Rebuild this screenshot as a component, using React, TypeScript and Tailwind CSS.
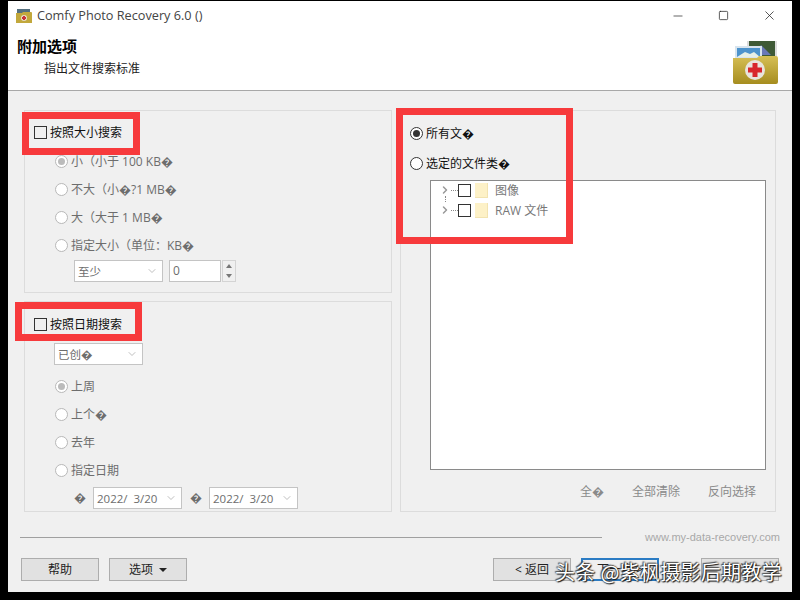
import React from 'react';
import { ChevronDown, ChevronRight, Minus, Square, X } from 'lucide-react';

const REPL = '\uFFFD';
const FONT = 'font-["Open_Sans","Noto_Sans_CJK_SC",sans-serif]';

const Check = () => <span className="w-[13px] h-[13px] shrink-0 border border-[#333] bg-transparent" />;

const Radio = ({ on, disabled }: { on?: boolean; disabled?: boolean }) => (
  <span
    className={`w-[13px] h-[13px] shrink-0 rounded-full border flex items-center justify-center ${
      disabled ? 'border-[#b8b8b8] bg-white' : 'border-[#333] bg-white'
    }`}
  >
    {on && <span className={`w-[7px] h-[7px] rounded-full ${disabled ? 'bg-[#bbb]' : 'bg-[#333]'}`} />}
  </span>
);

const RadioRow = ({ label, on }: { label: string; on?: boolean }) => (
  <div className="h-7 flex items-center gap-[3px] ml-[21px] text-[#6d6d6d]">
    <Radio on={on} disabled />
    <span className="whitespace-nowrap pt-[2px]">{label}</span>
  </div>
);

const Combo = ({ text, width }: { text: string; width: string }) => (
  <div className={`${width} h-[22px] bg-white border border-[#c4c4c4] flex items-center justify-between pl-[3px] pr-[4px] text-[#6d6d6d]`}>
    <span className="whitespace-pre pt-[2px] text-[11.500px]">{text}</span>
    <ChevronDown className="w-[12px] h-[12px] text-[#aaa]" strokeWidth={1.5} />
  </div>
);

const Btn = ({ children, className = 'border border-[#adadad] bg-[#e1e1e1]' }: { children?: React.ReactNode; className?: string }) => (
  <div className={`w-[78px] h-[23px] flex items-center justify-center text-[#222] pt-px ${className}`}>
    {children}
  </div>
);

const TreeRow = ({ label, first }: { label: string; first?: boolean }) => (
  <div className="relative h-5 pb-[2px] flex items-center">
    <ChevronRight className="w-[12px] h-[12px] text-[#999] ml-[8px]" strokeWidth={3} />
    <span className="w-[7px] border-t border-dotted border-[#888]" />
    <span className="w-[13px] h-[13px] border border-[#333] bg-white" />
    <span className="w-[13px] h-[15px] ml-[4px] bg-[#fdf1c7] border-r border-b border-[#f2e3b0]" />
    <span className="ml-[7px] text-[#777] pt-[2px]">{label}</span>
    {first && <span className="absolute left-[14px] top-[15px] h-[6px] border-l border-dotted border-[#888]" />}
  </div>
);

const FolderIcon = () => (
  <svg width="46" height="45" viewBox="0 0 46 45" className="absolute right-[13px] top-[39px]">
    <defs>
      <linearGradient id="fold" x1="0" y1="0" x2="0" y2="1">
        <stop offset="0" stopColor="#d6bf55" />
        <stop offset="1" stopColor="#a68d1f" />
      </linearGradient>
    </defs>
    <rect x="16" y="1" width="26" height="18" fill="#3f5a36" />
    <rect x="14" y="1" width="2" height="18" fill="#ddd" />
    <rect x="42" y="1" width="2" height="18" fill="#ddd" />
    <path d="M28 5l10 10H22z" fill="#6a78b8" />
    <rect x="2" y="6" width="27" height="13" fill="#d8e4ee" />
    <rect x="4" y="8" width="23" height="9" fill="#4d93cc" />
    <path d="M4 17l8-5 5 2 4-2 6 5z" fill="#e6efe6" />
    <path d="M0 18h24l2-2h17q2 0 2 2v24q0 2-2 2H2q-2 0-2-2z" fill="url(#fold)" />
    <circle cx="22" cy="30" r="10" fill="#e8e4dc" />
    <path d="M19.500 23h5v4.500h4.500v5h-4.500v4.500h-5v-4.500h-4.500v-5h4.500z" fill="#d8262c" />
  </svg>
);

const AppIcon = () => (
  <svg width="16" height="16" viewBox="0 0 16 16" className="shrink-0">
    <rect x="1" y="1" width="13" height="6" fill="#55707f" />
    <path d="M0 5h6l1-1h8q1 0 1 1v10H0z" fill="#c2a83c" />
    <circle cx="8" cy="10" r="3" fill="#e6dccb" />
    <path d="M7 8h2v1h1v2H9v1H7v-1H6V9h1z" fill="#c8323a" />
  </svg>
);

const Highlight = ({ className }: { className: string }) => (
  <div className={`absolute border-[7px] border-[#f73a3c] ${className}`} />
);

export default function App() {
  return (
    <div className={`relative w-[800px] h-[600px] bg-black pl-2 pr-2 pt-px pb-2 text-[12px] leading-none ${FONT}`}>
      <div className="w-full h-full bg-[#f0f0f0] flex flex-col">
        <div className="relative h-[89px] bg-white border-b border-[#a8a8a8] shrink-0 box-content">
          <div className="flex items-center h-[29px] pl-2">
            <AppIcon />
            <span className='ml-[5px] text-[12.700px] text-[#444] whitespace-nowrap'>Comfy Photo Recovery 6.0 ()</span>
            <div className="ml-auto flex items-center pr-[15px] gap-[33px] text-[#222]">
              <Minus className="w-[14px] h-[14px]" strokeWidth={1.2} />
              <Square className="w-[11px] h-[11px]" strokeWidth={1.6} />
              <X className="w-[15px] h-[15px]" strokeWidth={1.2} />
            </div>
          </div>
          <div className="ml-[9px] mt-[9px] text-[15px] font-bold text-black">附加选项</div>
          <div className="ml-9 mt-[9px] text-[12px] text-[#222]">指出文件搜索标准</div>
          <FolderIcon />
        </div>

        <div className="flex gap-2 ml-4 mt-[19px]">
          <div className="w-[368px] flex flex-col gap-2">
            <div className="h-[183px] border border-[#dcdcdc] pt-[11px] pl-[9px]">
              <div className="h-5 flex items-center gap-[3px] text-[#111]">
                <Check />
                <span className="pt-[2px]">按照大小搜索</span>
              </div>
              <div className="mt-[5px]">
                <RadioRow label={`小（小于 100 KB${REPL}`} on />
                <RadioRow label={`不大（小${REPL}?1 MB${REPL}`} />
                <RadioRow label={`大（大于 1 MB${REPL}`} />
                <RadioRow label={`指定大小（单位：KB${REPL}`} />
              </div>
              <div className="flex items-center ml-[40px] mt-px text-[#6d6d6d]">
                <Combo text="至少" width="w-[89px]" />
                <div className="ml-[6px] w-[52px] h-[22px] bg-white border border-[#c4c4c4] flex items-center pl-[3px]">0</div>
                <div className="ml-px w-[14px] h-[22px] border border-[#d4d4d4] flex flex-col items-center justify-around">
                  <span className="w-0 h-0 border-x-[3px] border-x-transparent border-b-[4px] border-b-[#777]" />
                  <span className="w-0 h-0 border-x-[3px] border-x-transparent border-t-[4px] border-t-[#777]" />
                </div>
              </div>
            </div>

            <div className="h-[211px] border border-[#dcdcdc] pt-[12px] pl-[9px]">
              <div className="h-5 flex items-center gap-[3px] text-[#111]">
                <Check />
                <span className="pt-[2px]">按照日期搜索</span>
              </div>
              <div className="ml-[20px] mt-[9px]">
                <Combo text={`已创${REPL}`} width="w-[89px]" />
              </div>
              <div className="mt-[7px]">
                <RadioRow label="上周" on />
                <RadioRow label={`上个${REPL}`} />
                <RadioRow label="去年" />
                <RadioRow label="指定日期" />
              </div>
              <div className="flex items-center ml-[40px] mt-[3px] text-[#6d6d6d]">
                <span className="w-[19px]">{REPL}</span>
                <Combo text="2022/  3/20" width="w-[89px]" />
                <span className="w-[19px] ml-[8px]">{REPL}</span>
                <Combo text="2022/  3/20" width="w-[89px]" />
              </div>
            </div>
          </div>

          <div className="w-[376px] h-[402px] border border-[#dcdcdc] pt-2 pl-[9px]">
            <div className="h-7 flex items-center gap-[3px] text-[#111]">
              <Radio on />
              <span className="pt-[2px]">所有文{REPL}</span>
            </div>
            <div className="h-7 mt-[2px] flex items-center gap-[3px] text-[#111]">
              <Radio />
              <span className="pt-[2px]">选定的文件类{REPL}</span>
            </div>
            <div className="ml-5 mt-[3px] w-[336px] h-[290px] bg-white border border-[#8a8a8a]">
              <TreeRow label="图像" first />
              <TreeRow label="RAW 文件" />
            </div>
            <div className="flex justify-end gap-7 mt-4 mr-[19px] text-[#8a8a8a]">
              <span>全{REPL}</span>
              <span>全部清除</span>
              <span>反向选择</span>
            </div>
          </div>
        </div>

        <div className="flex items-center h-4 mt-[17px] ml-3 mr-3">
          <div className="w-[582px] border-t border-[#a0a0a0]" />
          <span className='ml-auto text-[11px] text-[#a8a8a8] font-["Liberation_Sans",sans-serif]'>www.my-data-recovery.com</span>
        </div>

        <div className="flex mt-[13px] ml-[13px]">
          <Btn>帮助</Btn>
          <Btn className="ml-[10px] gap-[6px] border border-[#adadad] bg-[#e1e1e1]">
            选项
            <span className="w-0 h-0 border-x-[4px] border-x-transparent border-t-[4px] border-t-[#222]" />
          </Btn>
          <Btn className="ml-[306px] border border-[#adadad] bg-[#e1e1e1]">{'< 返回'}</Btn>
          <Btn className="ml-[10px] border-2 border-[#2b7cc4] bg-[#efefef]">{'下一步 >'}</Btn>
          <Btn className="ml-[42px] border border-[#adadad] bg-[#e1e1e1]">取消</Btn>
        </div>
      </div>

      <Highlight className="left-[22px] top-[112px] w-[118px] h-[43px]" />
      <Highlight className="left-[15px] top-[302px] w-[127px] h-[39px]" />
      <Highlight className="left-[396px] top-[108px] w-[177px] h-[136px]" />

      <div className='absolute left-[555px] top-[562px] text-[20px] tracking-[0.3px] text-white whitespace-nowrap font-["Noto_Sans_CJK_SC",sans-serif] [text-shadow:0_0_2px_#000,1px_1px_1px_#222,-1px_-1px_1px_#666]'>
        头条 @紫枫摄影后期教学
      </div>
    </div>
  );
}
